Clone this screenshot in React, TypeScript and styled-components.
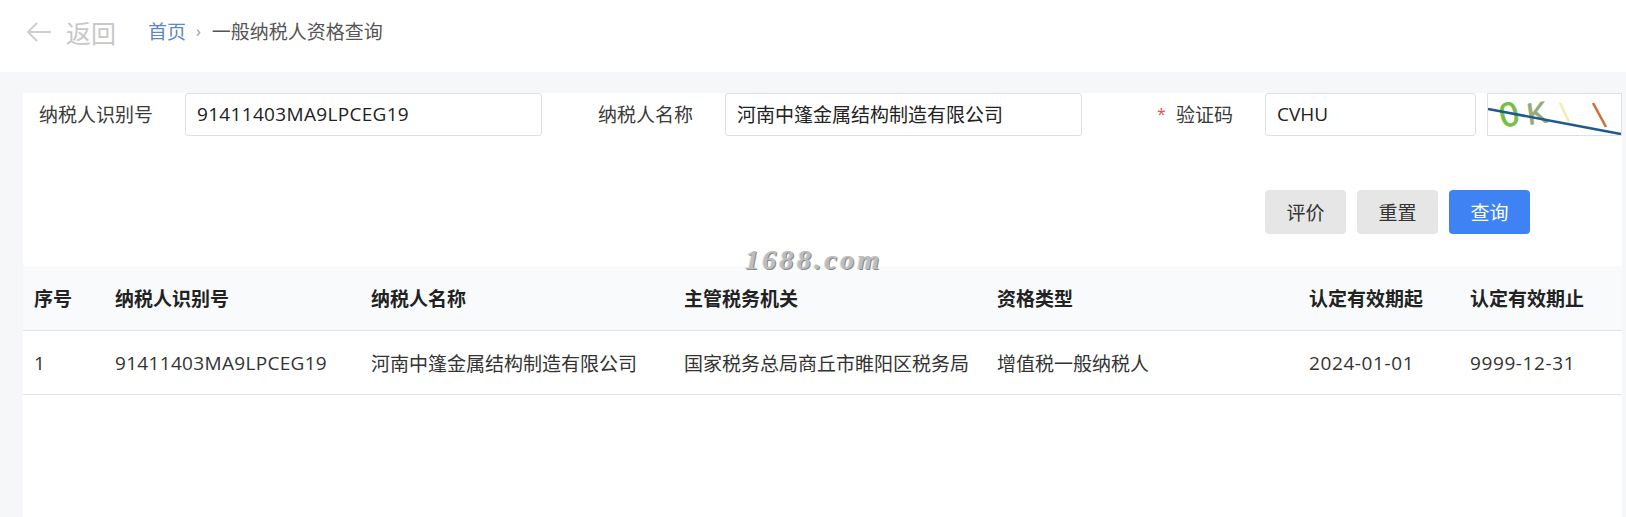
import React from 'react'
import styled, { createGlobalStyle } from 'styled-components'

const GlobalStyle = createGlobalStyle`
  html, body {
    margin: 0;
    height: 100%;
    overflow: hidden;
    background: #f5f7f9;
  }
  body {
    font-family: 'Open Sans', 'Noto Sans CJK SC', sans-serif;
    color: #333;
  }
`

const Page = styled.div`
  position: relative;
  height: 517px;
  display: flex;
  flex-direction: column;
`

const TopBar = styled.header`
  height: 72px;
  box-sizing: border-box;
  background: #fff;
  display: flex;
  align-items: center;
  padding: 0 0 9px 26px;
`

const BackLink = styled.a`
  display: flex;
  align-items: center;
  gap: 14px;
  width: 122px;
  font-size: 25px;
  color: #c8c8c8;
`

const Crumbs = styled.nav`
  display: flex;
  align-items: center;
  font-size: 19px;
  color: #555;
  margin-bottom: 2px;
`

const CrumbLink = styled.a`
  color: #5b87c7;
`

const CrumbSep = styled.span`
  color: #999;
  margin: 0 11px 0 10px;
  font-size: 16px;
`

const Panel = styled.main`
  flex: 1;
  margin: 21px 4px 0 23px;
  background: #fff;
`

const FormRow = styled.form`
  display: flex;
  align-items: stretch;
  height: 43px;
`

const Label = styled.label<{ $width: number; $pad: number }>`
  width: ${p => p.$width}px;
  padding: 0 0 1px ${p => p.$pad}px;
  box-sizing: border-box;
  flex: none;
  display: flex;
  align-items: center;
  font-size: 19px;
  color: #3a3a3a;
`

const Star = styled.span`
  color: #d9534f;
  width: 19px;
  font-size: 16px;
`

const Field = styled.input<{ $width: number; $spacing?: number }>`
  width: ${p => p.$width}px;
  flex: none;
  box-sizing: border-box;
  border: 1px solid #dcdfe6;
  border-radius: 3px;
  padding: 0 12px 2px 11px;
  font: inherit;
  font-size: 19px;
  letter-spacing: ${p => p.$spacing ?? 0}px;
  color: #222;
  background: #fff;
  outline: none;
`

const Captcha = styled.div`
  width: 135px;
  margin-left: 11px;
  box-sizing: border-box;
  border: 1px solid #dcdfe6;
  flex: none;
  svg {
    display: block;
  }
`

const Actions = styled.div`
  display: flex;
  gap: 11px;
  padding: 54px 0 0 1242px;
`

const ActionButton = styled.button<{ $primary?: boolean }>`
  width: 81px;
  height: 44px;
  border: 0;
  border-radius: 4px;
  font: inherit;
  font-size: 19px;
  color: ${p => (p.$primary ? '#fff' : '#333')};
  background: ${p => (p.$primary ? '#3f82f3' : '#e6e6e6')};
`

const Table = styled.table`
  width: 1599px;
  margin-top: 32px;
  border-collapse: collapse;
  table-layout: fixed;
  font-size: 19px;

  th,
  td {
    padding: 0 0 0 11px;
    text-align: left;
    border-bottom: 1px solid #e2e4e8;
    white-space: nowrap;
  }
  th {
    height: 64px;
    background: #f8fafc;
    font-weight: 700;
    color: #222;
  }
  td {
    height: 63px;
    color: #333;
  }
`

const Cell = styled.td<{ $spacing?: number }>`
  letter-spacing: ${p => p.$spacing ?? 0}px;
`

const Watermark = styled.span`
  position: absolute;
  left: 745px;
  top: 244px;
  font-family: 'Liberation Serif', serif;
  font-size: 28px;
  font-style: italic;
  font-weight: 700;
  letter-spacing: 3.3px;
  color: #bdbdbd;
  text-shadow: 1px 1px 0 #8a8a8a, -1px 0 0 #e2e2e2;
`

const columns = [81, 256, 313, 313, 312, 161, 163]
const headings = ['序号', '纳税人识别号', '纳税人名称', '主管税务机关', '资格类型', '认定有效期起', '认定有效期止']
const row = [
  { text: '1' },
  { text: '91411403MA9LPCEG19', spacing: 0.32 },
  { text: '河南中篷金属结构制造有限公司' },
  { text: '国家税务总局商丘市睢阳区税务局' },
  { text: '增值税一般纳税人' },
  { text: '2024-01-01', spacing: 0.6 },
  { text: '9999-12-31', spacing: 0.6 },
]

export default function App() {
  return (
    <Page>
      <GlobalStyle />
      <TopBar>
        <BackLink>
          <svg width="26" height="22" viewBox="0 0 26 22" fill="none" stroke="#cfcfcf" strokeWidth="2">
            <path d="M25 11H2M11 2l-9 9 9 9" />
          </svg>
          返回
        </BackLink>
        <Crumbs>
          <CrumbLink>首页</CrumbLink>
          <CrumbSep>›</CrumbSep>
          一般纳税人资格查询
        </Crumbs>
      </TopBar>
      <Panel>
        <FormRow>
          <Label $width={162} $pad={16}>纳税人识别号</Label>
          <Field $width={357} $spacing={0.32} defaultValue="91411403MA9LPCEG19" readOnly />
          <Label $width={183} $pad={56}>纳税人名称</Label>
          <Field $width={357} defaultValue="河南中篷金属结构制造有限公司" readOnly />
          <Label $width={183} $pad={75}><Star>*</Star>验证码</Label>
          <Field $width={211} defaultValue="CVHU" readOnly />
          <Captcha>
            <svg width="133" height="41" viewBox="0 0 133 41" fill="none">
              <text x="21" y="20" textAnchor="middle" dominantBaseline="central" transform="rotate(-14 21 20)" fontFamily="Liberation Sans, sans-serif" fontSize="34" fill="#74c043" stroke="#74c043" strokeWidth="0.8">0</text>
              <text x="49" y="19" textAnchor="middle" dominantBaseline="central" transform="rotate(-8 49 19)" fontFamily="Liberation Sans, sans-serif" fontSize="30" fill="#97ab78" stroke="#97ab78" strokeWidth="0.8">K</text>
              <path d="M72 9l9 19" stroke="#f1ecaa" strokeWidth="2.4" />
              <path d="M105 9l13 24" stroke="#d2703a" strokeWidth="2.6" />
              <path d="M0 15l133 25" stroke="#1e5a8c" strokeWidth="2.6" />
            </svg>
          </Captcha>
        </FormRow>
        <Actions>
          <ActionButton type="button">评价</ActionButton>
          <ActionButton type="button">重置</ActionButton>
          <ActionButton type="button" $primary>查询</ActionButton>
        </Actions>
        <Table>
          <colgroup>
            {columns.map((w, i) => <col key={i} width={w} />)}
          </colgroup>
          <thead>
            <tr>{headings.map(h => <th key={h}>{h}</th>)}</tr>
          </thead>
          <tbody>
            <tr>{row.map(c => <Cell key={c.text} $spacing={c.spacing}>{c.text}</Cell>)}</tr>
          </tbody>
        </Table>
      </Panel>
      <Watermark>1688.com</Watermark>
    </Page>
  )
}
